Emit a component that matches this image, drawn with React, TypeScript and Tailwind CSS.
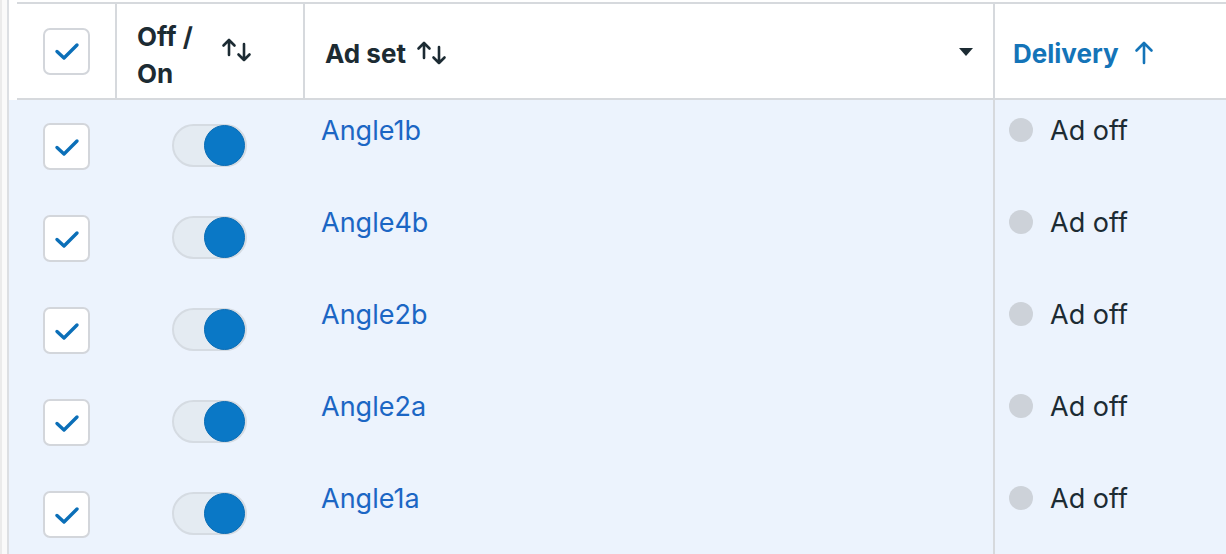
import type { ReactNode } from "react";

interface AdSetRow {
	id: string;
	name: string;
	active: boolean;
	delivery: string;
}

const rows: AdSetRow[] = [
	{ id: "1", name: "Angle1b", active: true, delivery: "Ad off" },
	{ id: "2", name: "Angle4b", active: true, delivery: "Ad off" },
	{ id: "3", name: "Angle2b", active: true, delivery: "Ad off" },
	{ id: "4", name: "Angle2a", active: true, delivery: "Ad off" },
	{ id: "5", name: "Angle1a", active: true, delivery: "Ad off" },
];

function Checkbox({ checked }: { checked: boolean }) {
	return (
		<div className="w-[47px] h-[47px] rounded-[7px] border-2 border-[#d3d6db] bg-white flex items-center justify-center shrink-0">
			{checked && (
				<svg width="28" height="22" viewBox="0 0 28 22" fill="none">
					<path
						d="M4 11.5 L11 18 L24 5"
						stroke="#0b6fb8"
						strokeWidth="3.4"
						strokeLinecap="round"
						strokeLinejoin="round"
					/>
				</svg>
			)}
		</div>
	);
}

function Toggle({ on }: { on: boolean }) {
	return (
		<div
			className={`w-[75px] h-[43px] rounded-full border-2 border-[#d5dbe2] bg-[#e4ebf2] flex items-center ${on ? "justify-end" : "justify-start"}`}
		>
			<div className="w-[41px] h-[41px] rounded-full bg-[#0a78c6] border border-[#0a6db5]" />
		</div>
	);
}

function SortBoth() {
	return (
		<svg width="32" height="26" viewBox="0 0 32 26" fill="none">
			<g stroke="#1c2b33" strokeWidth="2.6" strokeLinecap="round" strokeLinejoin="round">
				<path d="M8 18 V3 M2.5 8.5 L8 3 L13.5 8.5" />
				<path d="M23 7 V23 M17.5 17.5 L23 23 L28.5 17.5" />
			</g>
		</svg>
	);
}

function SortUp() {
	return (
		<svg width="24" height="26" viewBox="0 0 24 26" fill="none">
			<g stroke="#1474b8" strokeWidth="2.6" strokeLinecap="round" strokeLinejoin="round">
				<path d="M12 23 V3 M4.5 10.5 L12 3 L19.5 10.5" />
			</g>
		</svg>
	);
}

function HeaderCell({ className, children }: { className: string; children: ReactNode }) {
	return <div className={`h-full flex items-center ${className}`}>{children}</div>;
}

export default function App() {
	return (
		<div
			className="w-[1226px] h-[554px] overflow-hidden bg-white flex text-[#1c2b33]"
			style={{ fontFamily: "Inter, Roboto, sans-serif" }}
		>
			{/* scroll gutter */}
			<div className="w-[2px] bg-[#ebebeb] shrink-0" />
			<div className="w-[5px] bg-[#fafafa] shrink-0" />
			<div className="w-[2px] bg-[#dcdfe3] shrink-0" />

			<div className="flex-1 flex flex-col min-w-0">
				{/* header */}
				<div className="flex h-[100px] pt-[2px] bg-white shrink-0">
					<div className="w-[8px] shrink-0" />
					<div className="flex-1 flex border-y-2 border-[#d6d9dd]">
						<HeaderCell className="w-[98px] shrink-0 pl-[26px]">
							<Checkbox checked />
						</HeaderCell>
						<HeaderCell className="w-[188px] shrink-0 border-l-2 border-[#d6d9dd] pl-[20px]">
							<div className="text-[26px] font-bold leading-[37px] w-[84px] pt-[8px]">
								Off /<br />On
							</div>
							<div className="mt-[-2px]">
								<SortBoth />
							</div>
						</HeaderCell>
						<HeaderCell className="w-[690px] shrink-0 border-l-2 border-[#d6d9dd] pl-[20px] pr-[20px] justify-between">
							<div className="flex items-center gap-[10px] pt-[4px]">
								<span className="text-[26px] font-bold">Ad set</span>
								<SortBoth />
							</div>
							<svg width="14" height="8" viewBox="0 0 14 8" className="mt-[2px]">
								<path d="M0 0 H14 L7 8 Z" fill="#1c2b33" />
							</svg>
						</HeaderCell>
						<HeaderCell className="flex-1 border-l-2 border-[#d6d9dd] pl-[18px] gap-[13px] pt-[4px]">
							<span className="text-[26px] font-bold text-[#1474b8]">Delivery</span>
							<SortUp />
						</HeaderCell>
					</div>
				</div>

				{/* rows */}
				<div className="flex-1 bg-[#ecf3fd]">
					{rows.map((row) => (
						<div key={row.id} className="flex h-[92px]">
							<div className="w-[106px] shrink-0 pl-[34px] pt-[23px]">
								<Checkbox checked />
							</div>
							<div className="w-[188px] shrink-0 pl-[57px] pt-[24px]">
								<Toggle on={row.active} />
							</div>
							<div className="w-[690px] shrink-0 pl-[18px] pt-[13px]">
								<a className="text-[27px] text-[#1b66c4] leading-[36px]">{row.name}</a>
							</div>
							<div className="flex-1 border-l-2 border-[#d6d9dd] pl-[14px] pt-[13px] flex items-start gap-[17px]">
								<div className="w-[24px] h-[24px] rounded-full bg-[#cdd2d9] mt-[5px]" />
								<span className="text-[27px] leading-[36px] text-[#1c2b33]">{row.delivery}</span>
							</div>
						</div>
					))}
				</div>
			</div>
		</div>
	);
}
